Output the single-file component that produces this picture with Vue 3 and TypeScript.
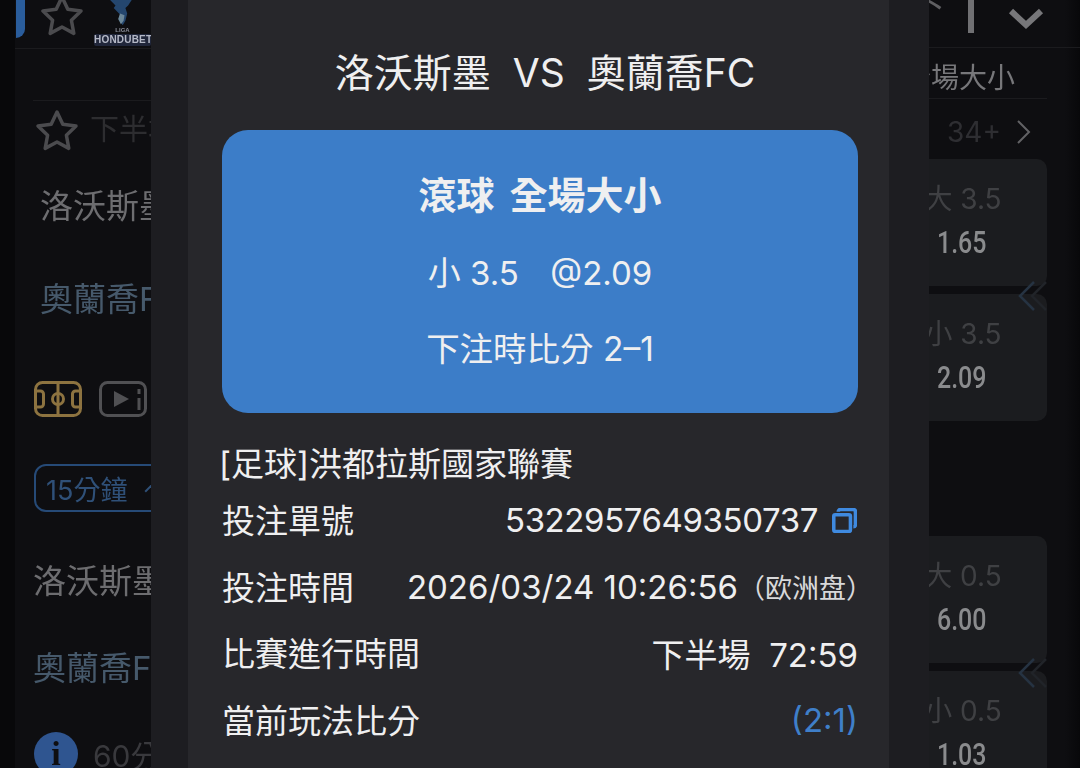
<script setup lang="ts">
const infoRows = [
  { label: '投注單號', value: '5322957649350737', copy: true },
  { label: '投注時間', value: '2026/03/24 10:26:56', note: '（欧洲盘）' },
  { label: '比賽進行時間', value: '下半場\u00a0\u00a072:59' },
  { label: '當前玩法比分', value: '(2:1)', blue: true },
]

const oddsGroups = [
  [
    { name: '大 3.5', odds: '1.65' },
    { name: '小 3.5', odds: '2.09' },
  ],
  [
    { name: '大 0.5', odds: '6.00' },
    { name: '小 0.5', odds: '1.03' },
  ],
]
</script>

<template>
  <div class="screen">
    <aside class="left">
      <div class="left__top">
        <span class="left__tab"></span>
        <svg class="star star--top" viewBox="0 0 44 42">
          <path d="M22 3l5.800 12.200 13.200 1.800-9.600 9.200 2.400 13.200L22 33l-11.800 6.400 2.400-13.200L3 17l13.200-1.800z" />
        </svg>
        <div class="logo">
          <svg viewBox="0 0 30 30" class="logo__mark">
            <path d="M4 0h24l-4 6-3 3 2 6-2 8-3 5-4-6 1-6-7-7 2-3z" fill="#24466e" />
            <path d="M15 15l5 2-1 6-3 4-3-6z" fill="#6b8799" />
          </svg>
          <span class="logo__liga">LIGA</span>
          <span class="logo__name">HONDUBET</span>
        </div>
      </div>
      <div class="left__body">
        <div class="half">
          <svg class="star" viewBox="0 0 44 42">
            <path d="M22 3l5.800 12.200 13.200 1.800-9.600 9.200 2.400 13.200L22 33l-11.800 6.400 2.400-13.200L3 17l13.200-1.800z" />
          </svg>
          <span class="half__text">下半場</span>
        </div>
        <div class="team team--home team--first">洛沃斯墨</div>
        <div class="team team--away team--second">奧蘭喬FC</div>
        <div class="media">
          <svg class="media__icon" viewBox="0 0 48 36" fill="none" stroke="#8d7340" stroke-width="3">
            <rect x="1.500" y="1.500" width="45" height="33" rx="7" />
            <path d="M24 1.500v33M1.500 10h5a3 3 0 0 1 3 3v10a3 3 0 0 1-3 3h-5M46.500 10h-5a3 3 0 0 0-3 3v10a3 3 0 0 0 3 3h5" />
            <circle cx="24" cy="18" r="5.500" />
          </svg>
          <svg class="media__icon" viewBox="0 0 48 36" fill="none" stroke="#505053" stroke-width="3">
            <rect x="1.500" y="1.500" width="45" height="33" rx="7" />
            <path d="M40 8v5M40 17v12" />
            <path d="M15 10l15 8-15 8z" fill="#505053" stroke="none" />
          </svg>
        </div>
        <div class="period">
          <span>15分鐘</span>
          <i class="period__caret"></i>
        </div>
        <div class="team team--home team--third">洛沃斯墨</div>
        <div class="team team--away team--fourth">奧蘭喬FC</div>
        <div class="notice">
          <span class="notice__icon">i</span>
          <span>60分鐘</span>
        </div>
      </div>
    </aside>

    <div class="band">
      <main class="dialog">
        <h1 class="dialog__title">洛沃斯墨&nbsp;&nbsp;VS&nbsp;&nbsp;奧蘭喬FC</h1>
        <section class="ticket">
          <div class="ticket__market">滾球 全場大小</div>
          <div class="ticket__pick">小 3.5 &nbsp;<span class="ticket__odds">@2.09</span></div>
          <div class="ticket__score">下注時比分 2–1</div>
        </section>
        <div class="league">[足球]洪都拉斯國家聯賽</div>
        <div v-for="row in infoRows" :key="row.label" class="info">
          <span>{{ row.label }}</span>
          <span class="info__value" :class="{ 'info__value--blue': row.blue, 'info__value--tight': row.copy }">
            <span>{{ row.value }}</span>
            <small v-if="row.note" class="info__note">{{ row.note }}</small>
            <svg v-if="row.copy" class="copy" viewBox="0 0 24 24" fill="none" stroke="#3f8ae0" stroke-width="3.400">
              <rect x="1.700" y="6.500" width="16" height="16" rx="1.500" />
              <path d="M6 3.500a2 2 0 0 1 2-2h12.500a2 2 0 0 1 2 2V16a2 2 0 0 1-2 2" />
            </svg>
          </span>
        </div>
      </main>
    </div>

    <aside class="right">
      <div class="right__top">
        <span class="right__clip">下</span>
        <span class="right__bar"></span>
        <svg class="right__chevron" viewBox="0 0 36 22" fill="none" stroke="#77777a" stroke-width="6">
          <path d="M3 3l15 14L33 3" />
        </svg>
      </div>
      <div class="right__head">全場大小</div>
      <div class="right__more">
        <span>34+</span>
        <svg viewBox="0 0 16 26" fill="none" stroke="#626265" stroke-width="2">
          <path d="M2 2l11 11L2 24" />
        </svg>
      </div>
      <div v-for="(group, index) in oddsGroups" :key="index" class="odds">
        <div v-for="item in group" :key="item.name" class="odds__card">
          <span class="odds__name">{{ item.name }}</span>
          <b class="odds__value">{{ item.odds }}</b>
        </div>
        <svg class="odds__arrows" viewBox="0 0 30 30" fill="none" stroke-width="2.500">
          <path d="M16 1L2 15l14 14" stroke="#263342" />
          <path d="M28 1L14 15l14 14" stroke="#212429" />
        </svg>
      </div>
    </aside>
  </div>
</template>

<style scoped>
.screen {
  display: flex;
  width: 1080px;
  height: 768px;
  overflow: hidden;
  background: #0e0e11;
  font-family: Inter, "Noto Sans CJK TC", sans-serif;
}

/* left column behind the dialog */
.left {
  width: 151px;
  flex: none;
  overflow: hidden;
  white-space: nowrap;
  background: linear-gradient(90deg, #08080a 15px, #0e0e11 15px);
  filter: blur(0.5px);
}
.left__top {
  position: relative;
  height: 48px;
  margin-left: 15px;
  border-bottom: 1px solid #1b1b1e;
}
.left__tab {
  position: absolute;
  top: -10px;
  left: 1px;
  width: 9px;
  height: 48px;
  border-radius: 0 0 9px 0;
  background: #2a5d9c;
}
.star {
  width: 44px;
  height: 42px;
  flex: none;
  fill: none;
  stroke: #4b4b4e;
  stroke-width: 3.500;
  stroke-linejoin: round;
}
.star--top {
  position: absolute;
  top: -6px;
  left: 25px;
}
.logo {
  position: absolute;
  top: 0;
  left: 79px;
  width: 57px;
  height: 47px;
  text-align: center;
  font-family: "Liberation Sans", sans-serif;
  font-weight: 700;
}
.logo__mark {
  display: block;
  width: 30px;
  height: 27px;
  margin: 0 auto 0 11px;
}
.logo__liga {
  display: block;
  font-size: 6px;
  line-height: 7px;
  color: #8a8d99;
}
.logo__name {
  display: block;
  font-size: 10px;
  line-height: 12px;
  letter-spacing: 0.2px;
  border-radius: 2px;
  background: #20263a;
  color: #b4b8c6;
}
.left__body {
  padding-left: 33px;
}
.half {
  display: flex;
  align-items: center;
  gap: 11px;
  height: 58px;
  margin-top: 51px;
  padding-left: 2px;
  border-top: 1px solid #1b1b1e;
  font-size: 29px;
  color: #2d2d30;
}
.half__text {
  padding-bottom: 6px;
}
.team {
  height: 44px;
  font-size: 33px;
  line-height: 44px;
}
.team--home {
  color: #6d6d70;
}
.team--away {
  color: #46596b;
}
.team--first {
  margin-top: 25px;
  margin-left: 7px;
}
.team--second {
  margin-top: 49px;
  margin-left: 7px;
}
.team--third {
  margin-top: 47px;
}
.team--fourth {
  margin-top: 43px;
}
.media {
  display: flex;
  gap: 17px;
  margin-top: 60px;
  margin-left: 1px;
}
.media__icon {
  width: 48px;
  height: 36px;
  flex: none;
}
.period {
  display: flex;
  align-items: center;
  gap: 20px;
  width: 160px;
  height: 48px;
  margin-top: 47px;
  margin-left: 1px;
  padding-left: 10px;
  box-sizing: border-box;
  border: 2px solid #264a77;
  border-radius: 12px;
  font-size: 27px;
  color: #2f5078;
}
.period__caret {
  width: 10px;
  height: 10px;
  margin-top: 5px;
  border-left: 2px solid #2f5078;
  border-top: 2px solid #2f5078;
  transform: rotate(45deg);
}
.notice {
  display: flex;
  align-items: center;
  gap: 15px;
  margin-top: 42px;
  margin-left: 1px;
  font-size: 30px;
  color: #39393d;
}
.notice__icon {
  width: 44px;
  height: 44px;
  flex: none;
  border-radius: 50%;
  background: #2f5590;
  color: #0e0e11;
  font: 700 34px/44px "Liberation Serif", serif;
  text-align: center;
}

/* centre band with the dialog */
.band {
  flex: 1;
  padding: 0 40px 0 37px;
  background: #1d1d21;
}
.dialog {
  height: 100%;
  padding: 45px 31px 0 34px;
  box-sizing: border-box;
  background: #27272b;
  color: #efeff0;
}
.dialog__title {
  margin: 0 0 29px;
  font-size: 39px;
  font-weight: 400;
  line-height: 56px;
  text-align: center;
  padding-left: 10px;
}
.ticket {
  display: flex;
  flex-direction: column;
  align-items: center;
  height: 283px;
  padding-top: 40px;
  box-sizing: border-box;
  border-radius: 26px;
  background: #3c7dc8;
  font-size: 33px;
}
.ticket__market {
  font-size: 38px;
  font-weight: 700;
  line-height: 50px;
  word-spacing: 6px;
}
.ticket__pick {
  margin-top: 28px;
  line-height: 50px;
}
.ticket__odds {
  margin-left: 13px;
}
.ticket__score {
  margin-top: 26px;
  font-size: 33.500px;
  line-height: 50px;
}
.league {
  margin-top: 28px;
  margin-left: -3px;
  font-size: 33px;
  line-height: 46px;
}
.info {
  display: flex;
  justify-content: space-between;
  align-items: center;
  height: 66.500px;
  margin-top: -1px;
  margin-bottom: 1px;
  font-size: 33px;
}
.info__value {
  display: flex;
  align-items: center;
  padding-top: 2px;
  white-space: nowrap;
}
.info__value--tight {
  letter-spacing: -0.4px;
}
.info__value--blue {
  color: #3f7fc9;
}
.info__note {
  margin-right: -15px;
  font-size: 27px;
  color: #d8d8da;
}
.copy {
  flex: none;
  width: 25px;
  height: 25px;
  margin-top: 1px;
  margin-left: 14px;
  margin-right: 1px;
}

/* right column behind the dialog */
.right {
  width: 151px;
  flex: none;
  overflow: hidden;
  white-space: nowrap;
  background: linear-gradient(90deg, #0e0e11 136px, #08080a 151px);
  filter: blur(0.5px);
}
.right__top {
  display: flex;
  justify-content: flex-end;
  gap: 34px;
  height: 48px;
  padding-right: 36px;
  box-sizing: border-box;
  border-bottom: 1px solid #1b1b1e;
}
.right__clip {
  flex: none;
  margin-top: -16px;
  margin-right: -11px;
  font-size: 34px;
  line-height: 44px;
  color: #5f5f62;
}
.right__bar {
  flex: none;
  width: 6px;
  height: 33px;
  background: #707073;
}
.right__chevron {
  flex: none;
  width: 36px;
  height: 22px;
  margin-top: 8px;
}
.right__head {
  display: flex;
  justify-content: flex-end;
  height: 51px;
  width: 118px;
  box-sizing: border-box;
  padding-right: 32px;
  padding-top: 9px;
  border-bottom: 1px solid #1b1b1e;
  font-size: 28px;
  line-height: 43px;
  color: #77777a;
  overflow: hidden;
}
.right__more {
  display: flex;
  align-items: center;
  gap: 15px;
  justify-content: flex-end;
  width: 103px;
  height: 60px;
  padding-top: 6px;
  box-sizing: border-box;
  font-size: 28px;
  color: #2e2e32;
}
.right__more svg {
  width: 16px;
  height: 26px;
  flex: none;
}
.odds {
  position: relative;
  display: flex;
  flex-direction: column;
  gap: 8px;
  width: 170px;
  margin-left: -52px;
  margin-bottom: 115px;
}
.odds__card {
  display: flex;
  flex-direction: column;
  align-items: center;
  height: 127px;
  padding-top: 20px;
  box-sizing: border-box;
  border-radius: 10px;
  background: #1b1c1f;
}
.odds__name {
  font-size: 28px;
  line-height: 40px;
  color: #3f4043;
  padding-left: 2px;
}
.odds__value {
  margin-top: 3px;
  font-family: Roboto, sans-serif;
  font-size: 32px;
  font-weight: 500;
  line-height: 40px;
  color: #8a8b8d;
  transform: scaleX(0.78);
}
.odds__arrows {
  position: absolute;
  top: 122px;
  left: 141px;
  width: 30px;
  height: 30px;
}
</style>

<style>
html,
body {
  background: #0e0e11;
}
</style>
